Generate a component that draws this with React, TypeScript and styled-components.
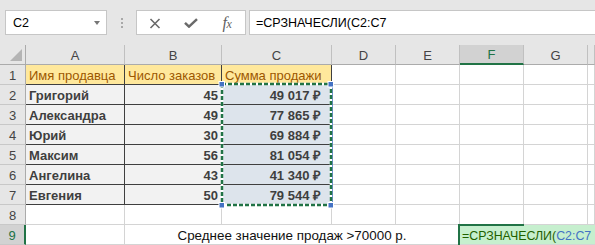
import React from 'react';
import styled, { createGlobalStyle, css } from 'styled-components';

const GlobalStyle = createGlobalStyle`
  html, body { margin: 0; padding: 0; background: #ffffff; overflow: hidden; }
  body { font-family: 'Liberation Sans', Arial, sans-serif; }
`;

const Page = styled.div`
  width: 595px;
  height: 245px;
  overflow: hidden;
  background: #ffffff;
  display: flex;
  flex-direction: column;
`;

const Toolbar = styled.div`
  box-sizing: border-box;
  height: 45px;
  flex: none;
  background: #e6e6e6;
  display: flex;
  align-items: flex-start;
  padding: 10px 0 0 5px;
  font-size: 12.5px;
  color: #000;
`;

const NameBox = styled.div`
  box-sizing: border-box;
  width: 102px;
  height: 25px;
  background: #fff;
  border: 1px solid #c6c6c6;
  display: flex;
  align-items: center;
  justify-content: space-between;
  padding: 0 6px 0 7px;
`;

const DropArrow = styled.span`
  width: 0;
  height: 0;
  border-left: 3.5px solid transparent;
  border-right: 3.5px solid transparent;
  border-top: 4px solid #767676;
`;

const Grip = styled.div`
  width: 2px;
  height: 10px;
  margin: 8px 13px 0 14px;
  background: repeating-linear-gradient(to bottom, #a8a8a8 0 2px, transparent 2px 4px);
`;

const ButtonBox = styled.div`
  box-sizing: border-box;
  width: 110px;
  height: 25px;
  background: #fff;
  border: 1px solid #c6c6c6;
  display: grid;
  grid-template-columns: repeat(3, 36px);
  align-items: center;
  justify-items: center;
  padding-top: 1px;
`;

const FxLabel = styled.span`
  font-family: 'Liberation Serif', 'Times New Roman', serif;
  font-style: italic;
  font-size: 16px;
  line-height: 16px;
  color: #5f5f5f;
  letter-spacing: -0.5px;
  & > small { font-size: 12px; }
`;

const FormulaBox = styled.div`
  box-sizing: border-box;
  flex: 1;
  height: 25px;
  margin-left: 3px;
  background: #fff;
  border: 1px solid #c6c6c6;
  border-right: none;
  display: flex;
  align-items: center;
  padding-left: 6px;
  white-space: nowrap;
`;

const Sheet = styled.div`
  position: relative;
  display: grid;
  grid-template-columns: 26px 99px 97px 110px 64px 64px 64px 64px 1fr;
  grid-auto-rows: 20px;
  font-size: 13px;
`;

type Kind =
  | 'corner'
  | 'col'
  | 'colSel'
  | 'row'
  | 'rowSel'
  | 'grid'
  | 'neutral'
  | 'output'
  | 'ref'
  | 'merged'
  | 'edit';

const kindStyles: Record<Kind, ReturnType<typeof css>> = {
  corner: css`
    position: relative;
    background: #e6e6e6;
    border-right-color: #ababab;
    border-bottom-color: #ababab;
    &::after {
      content: '';
      position: absolute;
      right: 3px;
      bottom: 3px;
      width: 12px;
      height: 12px;
      background: #b4b4b4;
      clip-path: polygon(100% 0, 100% 100%, 0 100%);
    }
  `,
  col: css`
    background: #e6e6e6;
    color: #444;
    border-right-color: #c0c0c0;
    border-bottom-color: #ababab;
  `,
  colSel: css`
    background: #d2d2d2;
    color: #217346;
    border-right-color: #c0c0c0;
    border-bottom: 2px solid #217346;
  `,
  row: css`
    background: #e6e6e6;
    color: #444;
    border-right-color: #ababab;
    border-bottom-color: #c8c8c8;
  `,
  rowSel: css`
    background: #d2d2d2;
    color: #217346;
    border-right: 2px solid #217346;
    border-bottom-color: #c8c8c8;
  `,
  grid: css``,
  neutral: css`
    background: #ffe89c;
    color: #9c5700;
    border-right-color: #3f3f3f;
    border-bottom-color: #3f3f3f;
  `,
  output: css`
    background: #f2f2f2;
    color: #3f3f3f;
    font-weight: bold;
    border-right-color: #3f3f3f;
    border-bottom-color: #3f3f3f;
  `,
  ref: css`
    background: #dde4ec;
    color: #3f3f3f;
    font-weight: bold;
    padding-right: 10px;
    border-right-color: #3f3f3f;
    border-bottom-color: #3f3f3f;
  `,
  merged: css`
    color: #111;
    font-size: 13.4px;
  `,
  edit: css`
    position: relative;
    overflow: visible;
    background: #c6efce;
    color: #1f6100;
    border-right: none;
    padding-left: 2px;
    font-size: 12.4px;
    &::before {
      content: '';
      position: absolute;
      left: -2px;
      top: -1px;
      width: 66px;
      height: 2px;
      background: #217346;
    }
    &::after {
      content: '';
      position: absolute;
      left: -2px;
      top: -1px;
      width: 2px;
      height: 21px;
      background: #217346;
    }
  `,
};

const Cell = styled.div<{ $kind: Kind; $align?: 'left' | 'right' | 'center'; $span?: number }>`
  box-sizing: border-box;
  display: flex;
  align-items: flex-end;
  justify-content: ${(p) =>
    p.$align === 'right' ? 'flex-end' : p.$align === 'center' ? 'center' : 'flex-start'};
  padding: 0 3px;
  line-height: 16px;
  white-space: nowrap;
  overflow: hidden;
  background: #fff;
  color: #000;
  border-right: 1px solid #d4d4d4;
  border-bottom: 1px solid #d4d4d4;
  grid-column: ${(p) => (p.$span ? `span ${p.$span}` : 'auto')};
  ${(p) => kindStyles[p.$kind]}
`;

const RefText = styled.span`
  color: #4472c4;
`;

const RangeMarker = styled.svg`
  position: absolute;
  left: 216px;
  top: 34px;
  width: 124px;
  height: 134px;
  pointer-events: none;
  overflow: visible;
`;

const columns = ['A', 'B', 'C', 'D', 'E', 'F', 'G', ''];

const sales: [string, number, string][] = [
  ['Григорий', 45, '49 017 ₽'],
  ['Александра', 49, '77 865 ₽'],
  ['Юрий', 30, '69 884 ₽'],
  ['Максим', 56, '81 054 ₽'],
  ['Ангелина', 43, '41 340 ₽'],
  ['Евгения', 50, '79 544 ₽'],
];

const EmptyCells: React.FC<{ count: number; prefix: string }> = ({ count, prefix }) => (
  <>
    {Array.from({ length: count }, (_, i) => (
      <Cell key={`${prefix}-${i}`} $kind="grid" />
    ))}
  </>
);

export default function App() {
  return (
    <Page>
      <GlobalStyle />
      <Toolbar>
        <NameBox>
          <span>C2</span>
          <DropArrow />
        </NameBox>
        <Grip />
        <ButtonBox>
          <svg width="12" height="11" viewBox="0 0 12 11">
            <path d="M1.5 1 L10.5 10 M10.5 1 L1.5 10" stroke="#6a6a6a" strokeWidth="1.6" fill="none" />
          </svg>
          <svg width="14" height="10" viewBox="0 0 14 10">
            <path d="M1 4.8 L5 8.6 L13 1.2" stroke="#6a6a6a" strokeWidth="2.5" fill="none" />
          </svg>
          <FxLabel>
            f<small>x</small>
          </FxLabel>
        </ButtonBox>
        <FormulaBox>=СРЗНАЧЕСЛИ(C2:C7</FormulaBox>
      </Toolbar>

      <Sheet>
        <Cell $kind="corner" />
        {columns.map((c, i) => (
          <Cell key={`h${i}`} $kind={c === 'F' ? 'colSel' : 'col'} $align="center">
            {c}
          </Cell>
        ))}

        <Cell $kind="row" $align="center">1</Cell>
        <Cell $kind="neutral">Имя продавца</Cell>
        <Cell $kind="neutral">Число заказов</Cell>
        <Cell $kind="neutral">Сумма продажи</Cell>
        <EmptyCells count={5} prefix="r1" />

        {sales.map(([name, count, sum], i) => (
          <React.Fragment key={name}>
            <Cell $kind="row" $align="center">{i + 2}</Cell>
            <Cell $kind="output">{name}</Cell>
            <Cell $kind="output" $align="right">{count}</Cell>
            <Cell $kind="ref" $align="right">{sum}</Cell>
            <EmptyCells count={5} prefix={`r${i + 2}`} />
          </React.Fragment>
        ))}

        <Cell $kind="row" $align="center">8</Cell>
        <EmptyCells count={8} prefix="r8" />

        <Cell $kind="rowSel" $align="center">9</Cell>
        <Cell $kind="grid" />
        <Cell $kind="merged" $align="center" $span={4}>
          Среднее значение продаж &gt;70000 р.
        </Cell>
        <Cell $kind="edit" $span={3}>
          =СРЗНАЧЕСЛИ(<RefText>C2:C7</RefText>
        </Cell>

        <RangeMarker viewBox="0 0 124 134">
          <line x1="116.5" y1="5" x2="116.5" y2="126" stroke="#4472c4" strokeWidth="1" />
          <rect x="6" y="5" width="109" height="121" fill="none" stroke="#ffffff" strokeWidth="2.5" />
          <rect x="6" y="5" width="109" height="121" fill="none" stroke="#217346" strokeWidth="2.5" strokeDasharray="4 2" />
          {[
            [6, 5],
            [115, 5],
            [6, 126],
            [115, 126],
          ].map(([x, y]) => (
            <rect key={`${x}-${y}`} x={x - 3} y={y - 2.5} width="5.5" height="5.5" fill="#4472c4" stroke="#ffffff" strokeWidth="1" />
          ))}
        </RangeMarker>
      </Sheet>
    </Page>
  );
}
